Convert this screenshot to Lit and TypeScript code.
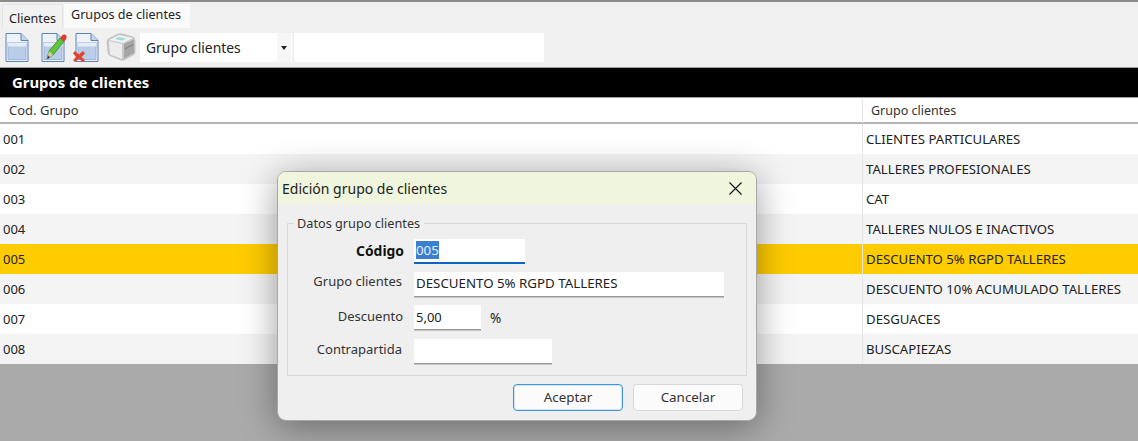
import { LitElement, html, css, svg } from "lit";
import { customElement } from "lit/decorators.js";

const rows = [
  ["001", "CLIENTES PARTICULARES"],
  ["002", "TALLERES PROFESIONALES"],
  ["003", "CAT"],
  ["004", "TALLERES NULOS E INACTIVOS"],
  ["005", "DESCUENTO 5% RGPD TALLERES"],
  ["006", "DESCUENTO 10% ACUMULADO TALLERES"],
  ["007", "DESGUACES"],
  ["008", "BUSCAPIEZAS"],
];

const doc = svg`<path d="M1 .5H16L23 7.5V28.5H1Z" fill="#eef3fa" stroke="#5f83b2"/><path d="M16 .5V7.5H23" fill="#c4d6ec" stroke="#5f83b2"/><rect x="3" y="9.5" width="18" height="17" fill="#b9cde8" stroke="#86a4cc" stroke-width=".7"/><rect x="3" y="9.5" width="18" height="4" fill="#e4ecf7"/>`;

@customElement("app-root")
export class AppRoot extends LitElement {
  static styles = css`
    :host { display: block; width: 1138px; height: 441px; position: relative; overflow: hidden;
      font-family: "Noto Sans", "Open Sans", sans-serif; font-size: 13px; color: #222;
      background: #aaaaaa; }
    .top { height: 28px; background: #f0f0f0; border-top: 2px solid #8c8c8c; box-sizing: border-box; display: flex; align-items: flex-end; padding-left: 2px; }
    .tab { width: 61px; height: 24px; padding-left: 6px; line-height: 27px; background: #f2f2f2; border: 1px solid #e4e4e4; border-bottom: 0; box-sizing: border-box; font-size: 12.6px; }
    .tab.on { width: 128px; height: 25px; background: #fafafa; line-height: 22px; padding-left: 7px; border-color: #f0f0f0; }
    .tools { height: 40px; background: #f0f0f0; display: flex; align-items: flex-start; padding: 5px 0 0 5px; box-sizing: border-box; border-bottom: 1px solid #a0a0a0; }
    .tools svg { display: block; flex: none; }
    .i2 { margin-left: 12px; }
    .i3 { margin-left: 6px; }
    .i4 { margin-left: 7px; }
    .combo { width: 152px; height: 29px; background: #fff; margin-left: 4px; display: flex; align-items: center; justify-content: space-between; padding-left: 6px; box-sizing: border-box; font-size: 13.9px; }
    .arrow { width: 14px; height: 100%; background: #f6f6f6; display: flex; align-items: center; justify-content: center; margin-right: 1px; }
    .arrow i { border: 3px solid transparent; border-top: 4px solid #222; border-bottom: 0; }
    .blank { width: 250px; height: 29px; background: #fff; margin-left: 2px; }
    .band { height: 30px; background: #000; color: #fff; font-weight: 700; font-size: 14.9px; line-height: 29px; padding-left: 12px; box-sizing: border-box; border-bottom: 1px solid #a0a0a0; }
    .row { display: grid; grid-template-columns: 863px 1fr; height: 30px; line-height: 30px; background: #fff; font-size: 13px; }
    .row > div { padding-left: 3px; border-right: 1px solid #e6e6e6; }
    .row > div:last-child { border-right: 0; font-size: 13.2px; }
    .row.even { background: #f4f4f4; }
    .row.sel { background: #ffcc00; }
    .row.head { height: 26px; line-height: 25px; border-bottom: 2px solid #b4b4b4; box-sizing: border-box; color: #333; }
    .row.head > div { padding-left: 9px; }
    .row.head > div:last-child { padding-left: 8px; font-size: 12.5px; }
    .dlg { position: absolute; left: 277px; top: 171px; width: 480px; height: 250px; box-sizing: border-box; background: #efefef; border-radius: 9px; border: 1px solid #a8a8a8; box-shadow: 0 6px 36px rgba(0,0,0,.38); overflow: hidden; display: flex; flex-direction: column; }
    .title { height: 32px; flex: none; background: #f0f6dd; display: flex; align-items: center; justify-content: space-between; padding: 0 14px 0 4px; font-size: 14px; color: #222; }
    .title svg { display: block; }
    .group { position: relative; margin: 19px 9px 0 9px; height: 153px; box-sizing: border-box; border: 1px solid #dadada; padding-top: 15px; display: flex; flex-direction: column; gap: 8px; }
    .legend { position: absolute; left: 6px; top: -9px; padding: 0 4px 0 3px; background: #efefef; line-height: 16px; color: #333; font-size: 12.7px; }
    .f { display: grid; grid-template-columns: 116px auto 1fr; column-gap: 10px; align-items: center; height: 25px; }
    .f label { text-align: right; color: #333; padding-right: 2px; padding-bottom: 7px; }
    .f label.strong { padding: 0 0 3px; }
    .f label.mid { padding: 0 1px 3px 0; }
    .f label.low { padding: 0 2px 6px 0; }
    .f b { color: #111; font-size: 13.9px; }
    .inp { background: #fff; box-sizing: border-box; border-bottom: 1px solid #9a9a9a; box-shadow: 0 1px 0 #c4c4c4; height: 25px; line-height: 22px; padding-left: 2px; color: #222; font-size: 13.3px; }
    .code { width: 111px; border-bottom: 2px solid #0a64c0; box-shadow: none; }
    .code span { background: #3a7fd0; color: #e8f1fb; }
    .name { width: 310px; }
    .disc { width: 67px; font-size: 13px; line-height: 24px; }
    .cp { width: 138px; }
    .last { margin-top: 1px; }
    .pct { font-size: 13.5px; padding-left: 0; margin-left: -1px; }
    .btns { display: flex; justify-content: flex-end; gap: 10px; padding: 8px 13px 0 0; }
    .btn { width: 110px; height: 27px; box-sizing: border-box; border-radius: 4px; background: #fbfbfb; border: 1px solid #d8d8d8; text-align: center; line-height: 25px; color: #333; font-size: 13.4px; }
    .btn.def { border: 1px solid #3f94dc; box-shadow: inset 0 0 0 1px #cfe4f6; }
  `;

  render() {
    return html`
      <div class="top">
        <div class="tab">Clientes</div>
        <div class="tab on">Grupos de clientes</div>
      </div>
      <div class="tools">
        <svg width="24" height="29" viewBox="0 0 24 29">${doc}</svg>
        <svg class="i2" width="26" height="29" viewBox="0 0 26 29">
          ${doc}
          <path d="M6 26L8 18L19 5L23 8.5L12 22Z" fill="#62c43c" stroke="#2c7a20" stroke-width=".7"/>
          <path d="M19 5L21.5 2Q23.5 .8 25 2.2T24.8 6.5L23 8.5Z" fill="#e23a2c"/>
          <path d="M6 26L8 18L12 22Z" fill="#d8c8a0"/>
          <path d="M6 26L7 22.5L9.3 24.4Z" fill="#444"/>
        </svg>
        <svg class="i3" width="26" height="29" viewBox="0 0 26 29">
          <g transform="translate(2 0)">${doc}</g>
          <path d="M2 18L6 21.5L10 18L12 20.5L8.5 24L12 27L10 29L6 26L2 29L0 27L3.5 24L0 20.5Z" fill="#e0442e"/>
        </svg>
        <svg class="i4" width="30" height="28" viewBox="0 0 30 28">
          <path d="M1 9Q1 6 4 5L12 1Q14 .5 16 1L27 4Q29 5 29 8V19Q29 21 27 22L19 26.5Q17 27.5 15 27L5 23Q2 22 2 19Z" fill="#c9c9c9" stroke="#b0b0b0" stroke-width=".6"/>
          <path d="M3 7L13 2L27 5L17 10Z" fill="#eef1f1"/>
          <path d="M12 4L20 5.5L16 7.5L9 6Z" fill="#a3d8d8"/>
          <path d="M3 8L16 11V26L4 21.5Z" fill="#ececec"/>
          <path d="M18 11L28 6.5V20L18 25.5Z" fill="#a6a6a6"/>
          <path d="M19 15L27 11V12.5L19 16.5Z" fill="#868686"/>
        </svg>
        <div class="combo"><span>Grupo clientes</span><div class="arrow"><i></i></div></div>
        <div class="blank"></div>
      </div>
      <div class="band">Grupos de clientes</div>
      <div class="row head"><div>Cod. Grupo</div><div>Grupo clientes</div></div>
      ${rows.map((r, i) => html`<div class="row ${i === 4 ? "sel" : i % 2 ? "even" : ""}"><div>${r[0]}</div><div>${r[1]}</div></div>`)}

      <div class="dlg">
        <div class="title"><span>Edición grupo de clientes</span>
          <svg width="13" height="13" viewBox="0 0 13 13"><path d="M.5.5L12.5 12.5M12.5.5L.5 12.5" stroke="#111" stroke-width="1.1" fill="none"/></svg>
        </div>
        <div class="group">
          <div class="legend">Datos grupo clientes</div>
          <div class="f"><label class="strong"><b>Código</b></label><div class="inp code"><span>005</span></div></div>
          <div class="f"><label>Grupo clientes</label><div class="inp name">DESCUENTO 5% RGPD TALLERES</div></div>
          <div class="f"><label class="mid">Descuento</label><div class="inp disc">5,00</div><div class="pct">%</div></div>
          <div class="f last"><label class="low">Contrapartida</label><div class="inp cp"></div></div>
        </div>
        <div class="btns"><div class="btn def">Aceptar</div><div class="btn">Cancelar</div></div>
      </div>
    `;
  }
}
